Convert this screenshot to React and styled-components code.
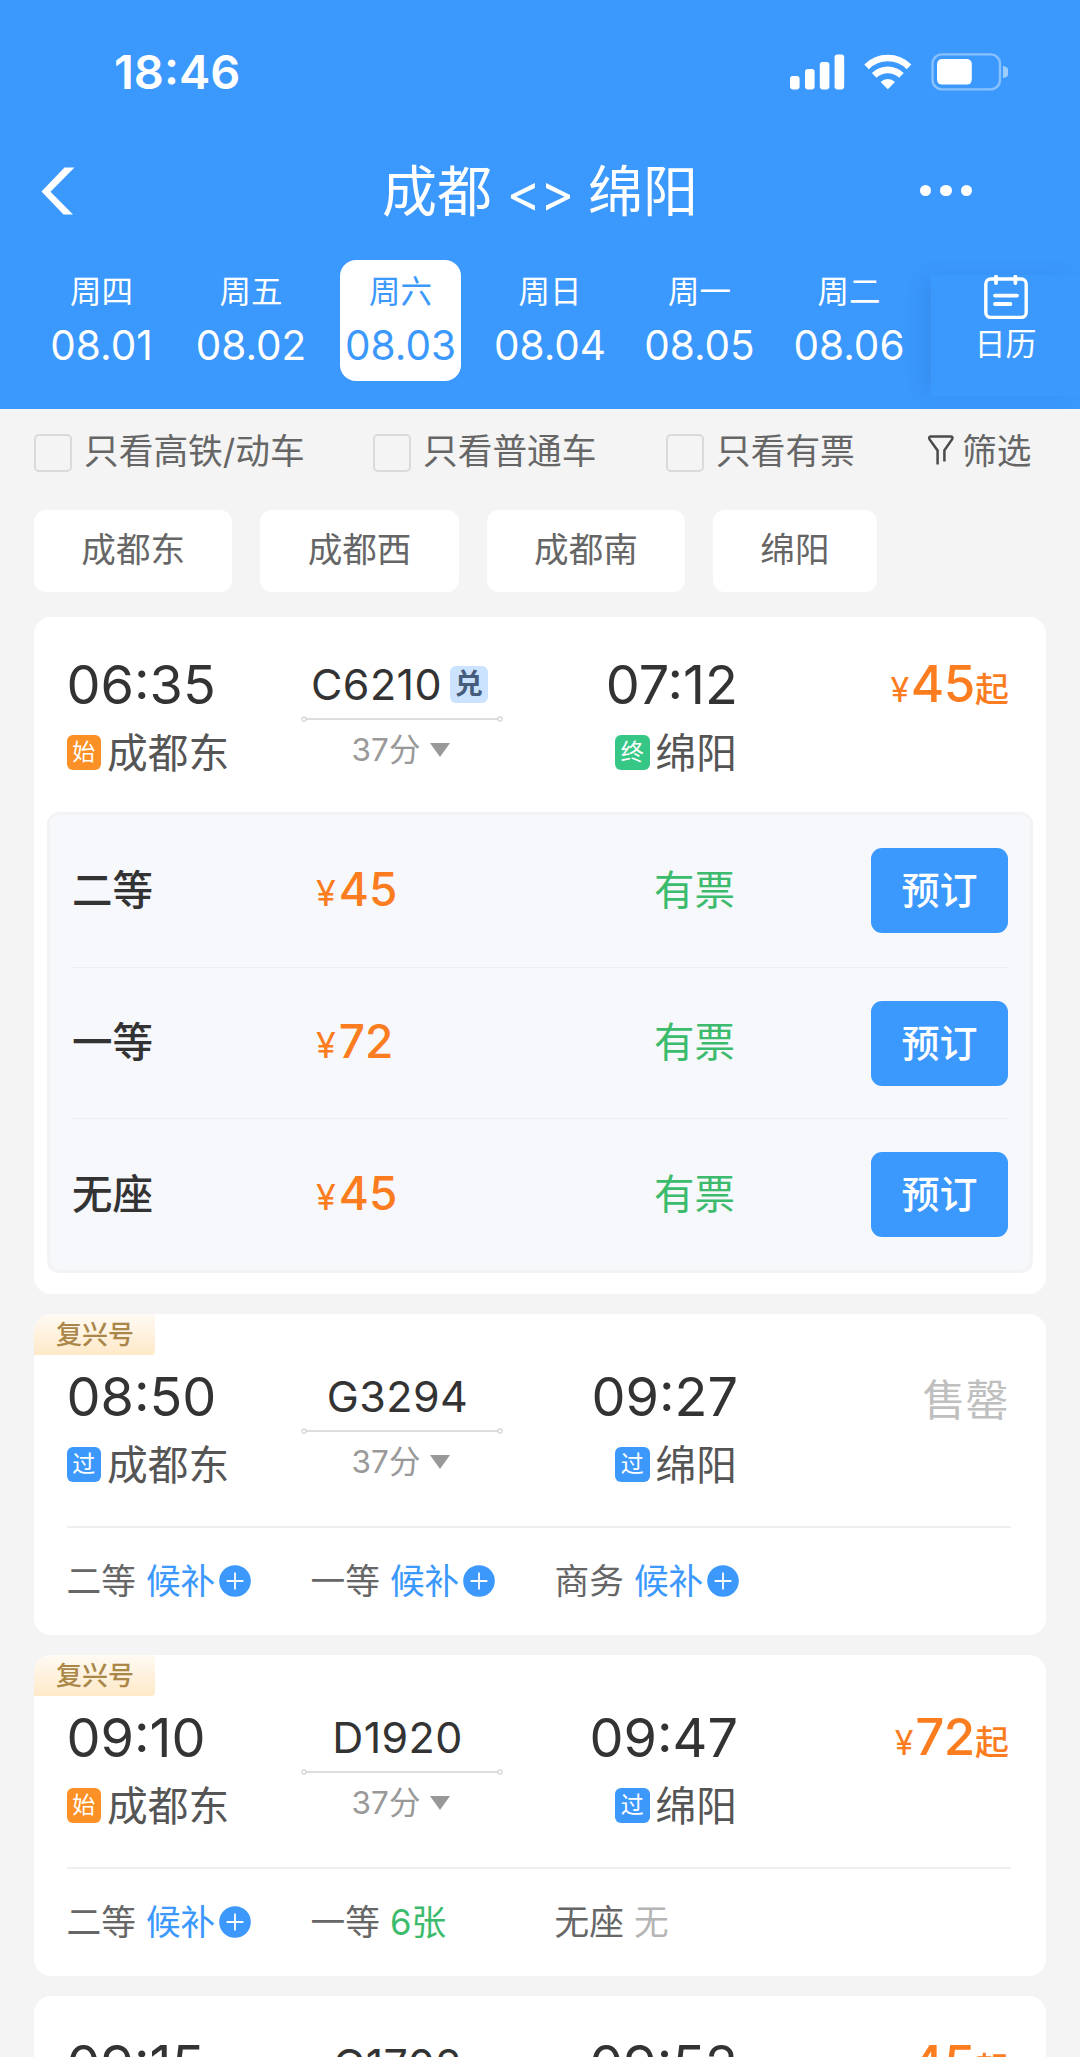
import { useState } from "react";
import styled, { createGlobalStyle } from "styled-components";

const days = [
  { week: "周四", date: "08.01" },
  { week: "周五", date: "08.02" },
  { week: "周六", date: "08.03" },
  { week: "周日", date: "08.04" },
  { week: "周一", date: "08.05" },
  { week: "周二", date: "08.06" },
];

const filters = ["只看高铁/动车", "只看普通车", "只看有票"];

const stations = ["成都东", "成都西", "成都南", "绵阳"];

const trains = [
  {
    no: "C6210",
    exchange: true,
    start: "06:35",
    startType: "始",
    end: "07:12",
    endType: "终",
    price: 45,
    seats: [
      { name: "二等", price: 45 },
      { name: "一等", price: 72 },
      { name: "无座", price: 45 },
    ],
  },
  {
    no: "G3294",
    fuxing: true,
    start: "08:50",
    startType: "过",
    end: "09:27",
    endType: "过",
    remains: [
      { name: "二等", wait: true },
      { name: "一等", wait: true },
      { name: "商务", wait: true },
    ],
  },
  {
    no: "D1920",
    fuxing: true,
    start: "09:10",
    startType: "始",
    end: "09:47",
    endType: "过",
    price: 72,
    remains: [
      { name: "二等", wait: true },
      { name: "一等", count: 6 },
      { name: "无座", count: 0 },
    ],
  },
  {
    no: "G1702",
    start: "09:15",
    startType: "过",
    end: "09:52",
    endType: "过",
    price: 45,
    remains: [],
  },
];

const tagColors = { 始: "#fb9026", 终: "#36c787", 过: "#3d98fc" };

const StatusIcons = () => (
  <svg width="218" height="38" viewBox="0 0 218 38">
    <g fill="#fff">
      <rect x="0" y="23" width="9.6" height="13.4" rx="2.8" />
      <rect x="15" y="16" width="9.6" height="20.4" rx="2.8" />
      <rect x="29.8" y="9" width="9.6" height="27.4" rx="2.8" />
      <rect x="44.6" y="1.6" width="9.6" height="34.8" rx="2.8" />
    </g>
    <g fill="none" stroke="#fff" strokeWidth="6.6">
      <path d="M76.6 13.8a30 30 0 0 1 42.4 0" />
      <path d="M84.2 22.4a19.4 19.4 0 0 1 27.2 0" />
    </g>
    <path d="M90.6 29a10.4 10.4 0 0 1 14.4 0l-7.2 7.2z" fill="#fff" />
    <rect
      x="142.5"
      y="1.4"
      width="67.5"
      height="35"
      rx="9.5"
      fill="none"
      stroke="#fff"
      strokeOpacity="0.4"
      strokeWidth="2.4"
    />
    <rect x="147" y="6" width="34.8" height="25.6" rx="5" fill="#fff" />
    <path d="M213 13a6 6 0 0 1 0 12z" fill="#fff" fillOpacity="0.5" />
  </svg>
);

const BackIcon = () => (
  <svg width="34" height="48" viewBox="0 0 34 48">
    <path d="M33.5 0.5H23.5L0.5 24.5L22.5 47.5H32L9.5 24.8z" fill="#fff" />
  </svg>
);

const CalendarIcon = () => (
  <svg width="44" height="46" viewBox="0 1 44 46" fill="none" stroke="#fff">
    <rect x="1.8" y="5" width="40.4" height="38.4" rx="5" strokeWidth="3.4" />
    <path
      d="M12 2.6V9M31.4 2.6V9M11 21.6H33M11 30H26.4"
      strokeWidth="3.8"
      strokeLinecap="round"
    />
  </svg>
);

const FunnelIcon = () => (
  <svg width="26" height="31" viewBox="0 0 26 31" fill="none">
    <path
      d="M9.6 29.6V15.4L1.6 4.4Q0.4 1.6 3 1.6H22.6Q25.4 1.6 24 4.4L16.4 15.4V26.6"
      stroke="#4a4a4a"
      strokeWidth="2.5"
    />
  </svg>
);

const RouteLine = () => (
  <svg width="202" height="8" viewBox="0 0 202 8" fill="none" stroke="#d2d2d2">
    <path d="M5 4H197" strokeWidth="1.4" />
    <circle cx="3" cy="4" r="2.1" strokeWidth="1.2" />
    <circle cx="199" cy="4" r="2.1" strokeWidth="1.2" />
  </svg>
);

const PlusIcon = () => (
  <svg width="32" height="32" viewBox="0 0 32 32">
    <circle cx="16" cy="16" r="15.8" fill="#3d98fc" />
    <path d="M7.6 16H24.4M16 7.6V24.4" stroke="#fff" strokeWidth="1.8" />
  </svg>
);

const Remain = ({ name, wait, count }) => {
  return (
    <RemainItem>
      {name}
      {wait && (
        <Waitlist>
          候补
          <PlusIcon />
        </Waitlist>
      )}
      {!wait && count > 0 && <Left>{count}张</Left>}
      {!wait && count === 0 && <NoneLeft>无</NoneLeft>}
    </RemainItem>
  );
};

const TrainCard = ({ train }) => {
  return (
    <Card $height={train.remains ? 320.5 : 677}>
      {train.fuxing && <Fuxing>复兴号</Fuxing>}
      <Summary $tight={train.fuxing}>
        <div>
          <Time>{train.start}</Time>
          <Station>
            <Tag $color={tagColors[train.startType]}>{train.startType}</Tag>
            <StationName>成都东</StationName>
          </Station>
        </div>
        <Middle>
          <TrainNo $badge={train.exchange}>
            {train.no}
            {train.exchange && <Exchange>兑</Exchange>}
          </TrainNo>
          <RouteLine />
          <Duration>
            37分
            <Caret />
          </Duration>
        </Middle>
        <Arrival>
          <Time>{train.end}</Time>
          <Station>
            <Tag $color={tagColors[train.endType]}>{train.endType}</Tag>
            <StationName>绵阳</StationName>
          </Station>
        </Arrival>
        {train.price ? (
          <Price>
            <small>¥</small>
            {train.price}
            <span>起</span>
          </Price>
        ) : (
          <SoldOut>售罄</SoldOut>
        )}
      </Summary>

      {train.seats && (
        <SeatPanel>
          {train.seats.map((seat) => (
            <SeatRow key={seat.name}>
              <SeatName>{seat.name}</SeatName>
              <SeatPrice>
                <small>¥</small>
                {seat.price}
              </SeatPrice>
              <SeatState>有票</SeatState>
              <BookButton>预订</BookButton>
            </SeatRow>
          ))}
        </SeatPanel>
      )}

      {train.remains && (
        <Remains>
          {train.remains.map((item) => (
            <Remain key={item.name} {...item} />
          ))}
        </Remains>
      )}
    </Card>
  );
};

const App = () => {
  const [selected, setSelected] = useState("08.03");

  return (
    <Page>
      <GlobalStyle />
      <Header>
        <StatusBar>
          <Clock>18:46</Clock>
          <StatusIcons />
        </StatusBar>
        <NavBar>
          <BackIcon />
          <Title>
            成都 <Arrows>&lt;&gt;</Arrows> 绵阳
          </Title>
          <More>
            <i />
            <i />
            <i />
          </More>
        </NavBar>
        <DateStrip>
          <Days>
            {days.map(({ week, date }) => (
              <Day
                key={date}
                $active={date === selected}
                onClick={() => setSelected(date)}
              >
                <Week>{week}</Week>
                <DateText>{date}</DateText>
              </Day>
            ))}
          </Days>
          <Calendar>
            <CalendarIcon />
            日历
          </Calendar>
        </DateStrip>
      </Header>

      <FilterBar>
        {filters.map((text) => (
          <FilterItem key={text}>
            <CheckBox />
            <FilterText>{text}</FilterText>
          </FilterItem>
        ))}
        <FilterMore>
          <FunnelIcon />
          <FilterText>筛选</FilterText>
        </FilterMore>
      </FilterBar>

      <Chips>
        {stations.map((name) => (
          <Chip key={name}>{name}</Chip>
        ))}
      </Chips>

      <TrainList>
        {trains.map((train) => (
          <TrainCard key={train.no} train={train} />
        ))}
      </TrainList>
    </Page>
  );
};

export default App;

const GlobalStyle = createGlobalStyle`
  * {
    box-sizing: border-box;
  }

  body {
    margin: 0;
    background-color: #f4f4f4;
    font-family: Inter, "Noto Sans CJK SC", sans-serif;
  }

  svg {
    display: block;
    flex-shrink: 0;
  }
`;

const Page = styled.div`
  width: 1080px;
  height: 2057px;
  overflow: hidden;
  background-color: #f4f4f4;
`;

const Header = styled.header`
  height: 409px;
  background-color: #3b98fd;
  color: #ffffff;
`;

const StatusBar = styled.div`
  display: flex;
  justify-content: space-between;
  align-items: center;
  height: 144px;
  padding: 0 72px 0 114px;
`;

const Clock = styled.span`
  padding-bottom: 2px;
  font-size: 47px;
  font-weight: 600;
`;

const NavBar = styled.nav`
  display: grid;
  grid-template-columns: 300px 1fr 300px;
  align-items: center;
  height: 93px;
  padding: 0 41px;
`;

const Title = styled.h1`
  margin: 0;
  padding-top: 2px;
  font-size: 55px;
  font-weight: 400;
  line-height: 80px;
  text-align: center;
  white-space: nowrap;
`;

const Arrows = styled.span`
  margin: 0 -1px 0 -1px;
  font-size: 52px;
  letter-spacing: -1px;
`;

const More = styled.div`
  display: flex;
  gap: 9px;
  padding-left: 180.5px;

  i {
    width: 11.6px;
    height: 11.6px;
    border-radius: 50%;
    background-color: #ffffff;
  }
`;

const DateStrip = styled.div`
  display: flex;
  height: 172px;
`;

const Days = styled.div`
  display: flex;
  gap: 28.5px;
  width: 931px;
  padding: 23px 0 0 41px;
`;

const Day = styled.div`
  display: flex;
  flex-direction: column;
  align-items: center;
  flex-shrink: 0;
  width: 121px;
  height: 121px;
  padding-top: 8px;
  border-radius: 16px;
  background-color: ${({ $active }) => ($active ? "#ffffff" : "transparent")};
  color: ${({ $active }) => ($active ? "#3b98fd" : "#ffffff")};
`;

const Week = styled.span`
  font-size: 31.5px;
  line-height: 48px;
`;

const DateText = styled.span`
  font-size: 40.5px;
  line-height: 60px;
`;

const Calendar = styled.div`
  display: flex;
  flex-direction: column;
  align-items: center;
  width: 149px;
  height: 121px;
  margin-top: 38px;
  background-color: #3b98fd;
  box-shadow: -10px 0 20px -4px rgba(20, 70, 130, 0.13);
  font-size: 31px;
  line-height: 46px;
`;

const FilterBar = styled.div`
  display: grid;
  grid-template-columns: 339px 293px 262px auto;
  align-items: center;
  height: 87px;
  padding-left: 34px;
  font-size: 34.7px;
  color: #666666;
`;

const FilterItem = styled.label`
  display: flex;
  align-items: center;
  gap: 12px;
  white-space: nowrap;
`;

const FilterText = styled.span`
  padding-bottom: 3px;
  line-height: 40px;
`;

const CheckBox = styled.span`
  width: 38px;
  height: 38px;
  border: 2px solid #dadada;
  border-radius: 5px;
`;

const FilterMore = styled(FilterItem)`
  gap: 8px;

  svg {
    margin-bottom: 4px;
  }
`;

const Chips = styled.div`
  display: flex;
  gap: 28px;
  padding: 13.5px 34px 0;
`;

const Chip = styled.button`
  height: 82px;
  padding: 0 47.2px 8px;

  border: none;
  border-radius: 12px;

  background-color: #ffffff;
  color: #666666;
  font-family: inherit;
  font-size: 34.6px;

  &:not(:last-child) {
    width: 198.4px;
  }
`;

const TrainList = styled.main`
  display: flex;
  flex-direction: column;
  gap: 20.5px;
  padding: 25px 34px 0;
`;

const Card = styled.section`
  position: relative;
  flex-shrink: 0;
  height: ${({ $height }) => $height}px;
  border-radius: 17px;
  overflow: hidden;
  background-color: #ffffff;
`;

const Fuxing = styled.span`
  position: absolute;
  top: 0;
  left: 0;
  width: 121px;
  height: 41px;
  padding-left: 22px;
  border-bottom-right-radius: 4px;
  background: linear-gradient(#fffaf4, #ffe9c8);
  color: #aa8749;
  font-size: 26px;
  font-weight: 500;
  line-height: 41px;
`;

const Summary = styled.div`
  display: grid;
  grid-template-columns: 234.5px 202px 234px 271.5px;
  height: ${({ $tight }) => ($tight ? 211.5 : 195.5)}px;
  padding: ${({ $tight }) => ($tight ? 51 : 36.5)}px 0 0 32.5px;
`;

const Time = styled.div`
  margin: -1px -1px 1px 0;
  font-size: 54px;
  line-height: 65px;
  color: #333333;
`;

const Station = styled.div`
  display: flex;
  align-items: center;
  gap: 6px;
  height: 69px;
`;

const StationName = styled.span`
  padding-top: 2px;
  font-size: 40.7px;
  line-height: 60px;
  color: #555555;
`;

const Tag = styled.span`
  width: 34.5px;
  height: 35px;
  border-radius: 6px;
  background-color: ${({ $color }) => $color};
  color: #ffffff;
  font-size: 23px;
  line-height: 35px;
  text-align: center;
`;

const Middle = styled.div`
  display: flex;
  flex-direction: column;
  align-items: center;
`;

const TrainNo = styled.div`
  display: flex;
  align-items: center;
  gap: 8px;
  height: 62px;
  padding-right: ${({ $badge }) => ($badge ? 5 : 9)}px;
  font-size: 43px;
  letter-spacing: 0.4px;
  line-height: 60px;
  color: #333333;
`;

const Exchange = styled.span`
  width: 38px;
  height: 37px;
  border-radius: 6px;
  background-color: #cce3ff;
  color: #465c7c;
  font-size: 28px;
  font-weight: 600;
  line-height: 36px;
  text-align: center;
`;

const Duration = styled.div`
  display: flex;
  align-items: center;
  gap: 10px;
  padding-right: 2px;
  font-size: 31.5px;
  line-height: 54px;
  color: #999999;
`;

const Caret = styled.i`
  border-top: 14px solid #999999;
  border-left: 10.5px solid transparent;
  border-right: 10.5px solid transparent;
`;

const Arrival = styled.div`
  display: flex;
  flex-direction: column;
  align-items: flex-end;
`;

const Price = styled.div`
  text-align: right;
  font-size: 51px;
  font-weight: 500;
  letter-spacing: -0.4px;
  line-height: 62px;
  color: #fb7d1f;

  small {
    margin-right: 2px;
    font-size: 34px;
    font-weight: 400;
  }

  span {
    font-size: 34px;
  }
`;

const SoldOut = styled.div`
  text-align: right;
  font-size: 43px;
  line-height: 70px;
  color: #bfbfbf;
`;

const SeatPanel = styled.div`
  margin: 0 13px;
  padding: 0 22px;
  border: 3px solid #f3f3f5;
  border-radius: 12px;
  background-color: #f6f8fc;
`;

const SeatRow = styled.div`
  display: grid;
  grid-template-columns: 244px 338px 1fr 137px;
  align-items: center;
  height: 151.7px;

  & + & {
    border-top: 1.5px solid #efedef;
  }
`;

const SeatName = styled.span`
  font-size: 40.5px;
  font-weight: 500;
  line-height: 60px;
  color: #333333;
`;

const SeatPrice = styled.span`
  font-size: 46px;
  font-weight: 500;
  line-height: 60px;
  color: #fb7d1f;

  small {
    margin-right: 3px;
    font-size: 36px;
    font-weight: 400;
  }
`;

const SeatState = styled.span`
  font-size: 40.5px;
  line-height: 60px;
  color: #3cbb6c;
`;

const BookButton = styled.button`
  height: 85px;
  padding: 0 0 6px;

  border: none;
  border-radius: 11px;

  background-color: #3b98fd;
  color: #ffffff;
  font-family: inherit;
  font-size: 38px;
  font-weight: 500;
`;

const Remains = styled.div`
  display: grid;
  grid-template-columns: repeat(3, 244px);
  height: 109px;
  margin: 0 35px 0 32.5px;
  border-top: 2px solid #efefef;
`;

const RemainItem = styled.div`
  display: flex;
  align-items: center;
  height: 106px;
  gap: 10px;
  font-size: 34.7px;
  line-height: 50px;
  color: #666666;
`;

const Waitlist = styled.span`
  display: flex;
  align-items: center;
  gap: 4px;
  color: #3b98fd;
`;

const Left = styled.span`
  color: #3cbb6c;
`;

const NoneLeft = styled.span`
  color: #b5b5b5;
`;
